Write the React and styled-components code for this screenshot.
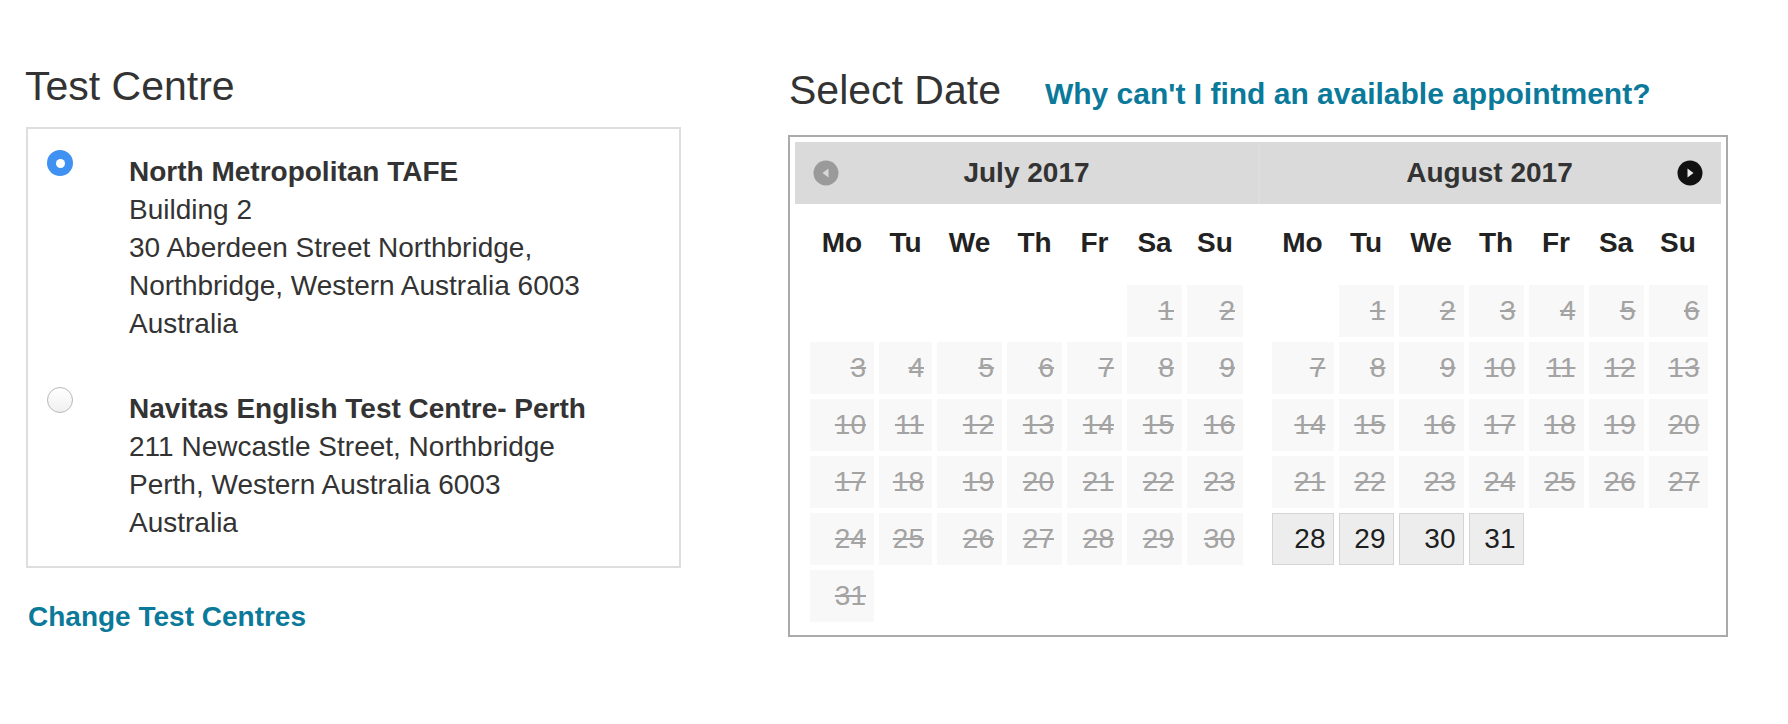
import React, { useState } from "react"
import styled, { createGlobalStyle } from "styled-components"

const GlobalStyle = createGlobalStyle`
  body {
    margin: 0;
    background: #fff;
    font-family: "Liberation Sans", Arial, Helvetica, sans-serif;
    color: #333;
  }
`

const centres = [
  {
    id: "nmt",
    name: "North Metropolitan TAFE",
    lines: ["Building 2", "30 Aberdeen Street Northbridge,", "Northbridge, Western Australia 6003", "Australia"],
  },
  {
    id: "navitas",
    name: "Navitas English Test Centre- Perth",
    lines: ["211 Newcastle Street, Northbridge", "Perth, Western Australia 6003", "Australia"],
  },
]

const dayNames = ["Mo", "Tu", "We", "Th", "Fr", "Sa", "Su"]

// builds the cells of a month, Monday first, null for the leading blanks
const buildMonth = (year, month) => {
  const first = new Date(year, month, 1).getDay()
  const offset = (first + 6) % 7
  const days = new Date(year, month + 1, 0).getDate()
  const cells = []
  for (let i = 0; i < offset; i++) cells.push(null)
  for (let d = 1; d <= days; d++) cells.push(d)
  return cells
}

const months = [
  { title: "July 2017", year: 2017, month: 6, columns: "64px 53px 65px 55px 55px 55px 56px", available: [] },
  { title: "August 2017", year: 2017, month: 7, columns: "62px 55px 65px 55px 55px 55px 59px", available: [28, 29, 30, 31] },
]

const PrevIcon = () => (
  <svg width="26" height="26" viewBox="0 0 26 26">
    <circle cx="13" cy="13" r="12.5" fill="#9a9a9a" />
    <path d="M15.5 8.5 L9.5 13 L15.5 17.5 Z" fill="#d8d8d8" />
  </svg>
)

const NextIcon = () => (
  <svg width="26" height="26" viewBox="0 0 26 26">
    <circle cx="13" cy="13" r="12.5" fill="#111" />
    <path d="M10.5 8.5 L16.5 13 L10.5 17.5 Z" fill="#e8e8e8" />
  </svg>
)

const App = () => {
  const [selected, setSelected] = useState("nmt")
  return (
    <>
      <GlobalStyle />
      <Page>
        <LeftColumn>
          <Title>Test Centre</Title>
          <CentreCard>
            {centres.map(c => (
              <CentreItem key={c.id} onClick={() => setSelected(c.id)}>
                <Radio $checked={selected === c.id} />
                <Address>
                  <CentreName>{c.name}</CentreName>
                  {c.lines.map(l => (
                    <div key={l}>{l}</div>
                  ))}
                </Address>
              </CentreItem>
            ))}
          </CentreCard>
          <ChangeLink href="#">Change Test Centres</ChangeLink>
        </LeftColumn>

        <RightColumn>
          <HeadingRow>
            <Title>Select Date</Title>
            <HelpLink href="#">Why can't I find an available appointment?</HelpLink>
          </HeadingRow>
          <Calendar>
            {months.map((m, i) => (
              <Month key={m.title}>
                <MonthHeader $divider={i > 0}>
                  {i === 0 && (
                    <NavButton $side="left">
                      <PrevIcon />
                    </NavButton>
                  )}
                  {m.title}
                  {i === months.length - 1 && (
                    <NavButton $side="right">
                      <NextIcon />
                    </NavButton>
                  )}
                </MonthHeader>
                <DayGrid $columns={m.columns}>
                  {dayNames.map(d => (
                    <DayName key={d}>{d}</DayName>
                  ))}
                  {buildMonth(m.year, m.month).map((d, idx) =>
                    d === null ? (
                      <EmptyCell key={"e" + idx} />
                    ) : (
                      <DayCell key={d} $available={m.available.includes(d)}>
                        {d}
                      </DayCell>
                    )
                  )}
                </DayGrid>
              </Month>
            ))}
          </Calendar>
        </RightColumn>
      </Page>
    </>
  )
}

const Page = styled.div`
  display: flex;
  align-items: flex-start;
  gap: 107px;
  padding: 63px 0 0 26px;
`

const LeftColumn = styled.div`
  width: 655px;
  display: flex;
  flex-direction: column;
`

const RightColumn = styled.div`
  width: 940px;
  padding-top: 4px;
  display: flex;
  flex-direction: column;
`

const Title = styled.h2`
  margin: 0;
  font-size: 41px;
  line-height: 46px;
  font-weight: 400;
  color: #333;
  margin-left: -1px;
`

const CentreCard = styled.div`
  margin-top: 18px;
  border: 2px solid #dedede;
  padding: 21px 19px 24px;
  display: flex;
  flex-direction: column;
  gap: 44px;
`

const CentreItem = styled.div`
  display: flex;
  align-items: flex-start;
  gap: 56px;
  cursor: pointer;
`

const Radio = styled.span`
  flex: none;
  width: 26px;
  height: 26px;
  border-radius: 50%;
  box-sizing: border-box;
  background: ${p => (p.$checked ? "#3f91f2" : "linear-gradient(#fff, #f0f0f0)")};
  border: ${p => (p.$checked ? "none" : "1px solid #b9b9b9")};
  display: flex;
  align-items: center;
  justify-content: center;
  &::after {
    content: "";
    width: 9px;
    height: 9px;
    border-radius: 50%;
    background: #fff;
    display: ${p => (p.$checked ? "block" : "none")};
  }
`

const Address = styled.div`
  padding-top: 3px;
  font-size: 28px;
  line-height: 38px;
  color: #333;
`

const CentreName = styled.div`
  font-weight: 700;
`

const ChangeLink = styled.a`
  margin-top: 30px;
  margin-left: 2px;
  font-size: 28px;
  line-height: 38px;
  font-weight: 700;
  color: #0b7a9a;
  text-decoration: none;
`

const HeadingRow = styled.div`
  display: flex;
  align-items: baseline;
  gap: 44px;
  padding-left: 2px;
`

const HelpLink = styled.a`
  font-size: 30px;
  font-weight: 700;
  color: #0b7a9a;
  text-decoration: none;
`

const Calendar = styled.div`
  margin-top: 22px;
  border: 2px solid #aaa;
  padding: 5px;
  display: flex;
  align-items: flex-start;
`

const Month = styled.div`
  flex: 1;
  display: flex;
  flex-direction: column;
`

const MonthHeader = styled.div`
  position: relative;
  height: 62px;
  background: #dadada;
  display: flex;
  align-items: center;
  justify-content: center;
  font-size: 28px;
  font-weight: 700;
  color: #333;
  box-shadow: ${p => (p.$divider ? "inset 2px 0 0 #dedede" : "none")};
`

const NavButton = styled.span`
  position: absolute;
  top: 18px;
  ${p => p.$side}: 18px;
  width: 26px;
  height: 26px;
  cursor: pointer;
  svg {
    display: block;
  }
`

const DayGrid = styled.div`
  display: grid;
  grid-template-columns: ${p => p.$columns};
  grid-template-rows: 63px;
  grid-auto-rows: 52px;
  gap: 5px;
  justify-content: center;
  padding: 13px 0 8px;
`

const DayName = styled.div`
  display: flex;
  align-items: center;
  justify-content: center;
  font-size: 28px;
  font-weight: 700;
  color: #222;
  padding-bottom: 11px;
`

const EmptyCell = styled.div``

const DayCell = styled.div`
  box-sizing: border-box;
  display: flex;
  align-items: center;
  justify-content: flex-end;
  font-size: 28px;
  padding-right: ${p => (p.$available ? "7px" : "8px")};
  background: ${p => (p.$available ? "#ededed" : "#f8f8f8")};
  border: ${p => (p.$available ? "1px solid #d5d5d5" : "none")};
  color: ${p => (p.$available ? "#1e1e1e" : "#a3a3a3")};
  text-decoration: ${p => (p.$available ? "none" : "line-through")};
  cursor: ${p => (p.$available ? "pointer" : "default")};
`

export default App
